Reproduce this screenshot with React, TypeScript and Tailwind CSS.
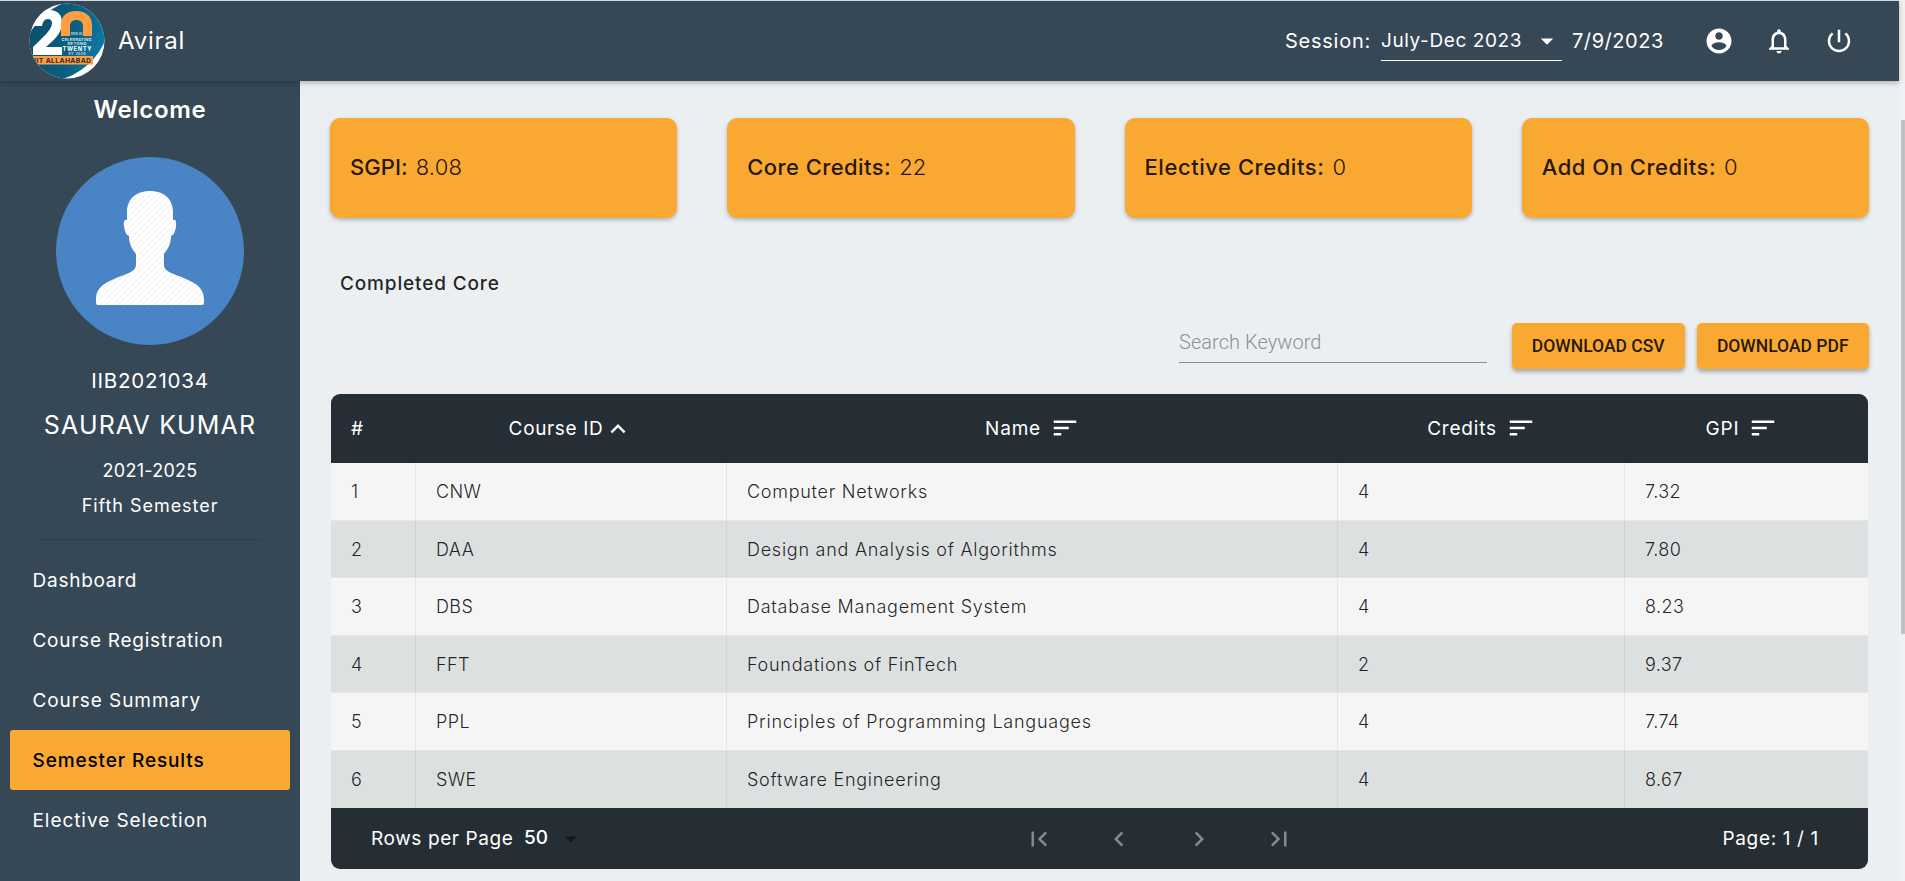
import type { ReactNode } from "react";

type Course = [string, string, string, string];

const courses: Course[] = [
  ["CNW", "Computer Networks", "4", "7.32"],
  ["DAA", "Design and Analysis of Algorithms", "4", "7.80"],
  ["DBS", "Database Management System", "4", "8.23"],
  ["FFT", "Foundations of FinTech", "2", "9.37"],
  ["PPL", "Principles of Programming Languages", "4", "7.74"],
  ["SWE", "Software Engineering", "4", "8.67"],
];

const columns = "grid grid-cols-[85px_311px_611px_287px_243px]";

function Icon({ d, className = "size-[30px]" }: { d: string; className?: string }) {
  return (
    <svg viewBox="0 0 24 24" fill="currentColor" className={`shrink-0 ${className}`}>
      <path d={d} />
    </svg>
  );
}

const icons = {
  account:
    "M12 2C6.48 2 2 6.48 2 12s4.48 10 10 10 10-4.48 10-10S17.52 2 12 2zm0 3c1.66 0 3 1.34 3 3s-1.34 3-3 3-3-1.34-3-3 1.34-3 3-3zm0 14.2c-2.5 0-4.71-1.28-6-3.22.03-1.99 4-3.08 6-3.08 1.99 0 5.97 1.09 6 3.08-1.29 1.94-3.5 3.22-6 3.22z",
  bell: "M12 22c1.1 0 2-.9 2-2h-4c0 1.1.9 2 2 2zm6-6v-5c0-3.07-1.63-5.64-4.5-6.32V4c0-.83-.67-1.5-1.5-1.5s-1.5.67-1.5 1.5v.68C7.64 5.36 6 7.92 6 11v5l-2 2v1h16v-1l-2-2zm-2 1H8v-6c0-2.48 1.51-4.5 4-4.5s4 2.02 4 4.5v6z",
  power:
    "M13 3h-2v10h2V3zm4.83 2.17l-1.42 1.42C17.99 7.86 19 9.81 19 12c0 3.87-3.13 7-7 7s-7-3.13-7-7c0-2.19 1.01-4.14 2.58-5.42L6.17 5.17C4.23 6.82 3 9.26 3 12c0 4.97 4.03 9 9 9s9-4.03 9-9c0-2.74-1.23-5.18-3.17-6.83z",
  sort: "M3 18h6v-2H3v2zM3 6v2h18V6H3zm0 7h12v-2H3v2z",
  up: "M7.41 15.41L12 10.83l4.59 4.58L18 14l-6-6-6 6z",
  first: "M18.41 16.59L13.82 12l4.59-4.59L17 6l-6 6 6 6zM6 6h2v12H6z",
  prev: "M15.41 7.41L14 6l-6 6 6 6 1.41-1.41L10.83 12z",
  next: "M10 6L8.59 7.41 13.17 12l-4.58 4.59L10 18l6-6z",
  last: "M5.59 7.41L10.18 12l-4.59 4.59L7 18l6-6-6-6zM16 6h2v12h-2z",
  drop: "M7 10l5 5 5-5z",
};

function Logo() {
  return (
    <svg viewBox="0 0 76 76" className="size-[76px] shrink-0">
      <defs>
        <clipPath id="logo-clip">
          <circle cx="38" cy="38" r="37.5" />
        </clipPath>
        <linearGradient id="logo-bg" x1="0" y1="0" x2="1" y2="1">
          <stop offset="0" stopColor="#0b4a63" />
          <stop offset="0.55" stopColor="#0a5f80" />
          <stop offset="1" stopColor="#0e86b8" />
        </linearGradient>
      </defs>
      <g clipPath="url(#logo-clip)">
        <rect width="76" height="76" fill="#fff" />
        <ellipse cx="37" cy="37" rx="48" ry="33" fill="url(#logo-bg)" transform="rotate(-42 37 37)" />
        <path
          d="M3 23 C6 12 12 7 20 7 C29 7 33 12 33 20 C33 30 25 37 17 44 H33 V52 H4 V44 C14 34 23 27 23 20 C23 17 21 16 19 16 C15 16 14 19 13 23 Z"
          fill="#fff"
        />
        <path
          d="M32 33 V22 C32 12 39 8 47.5 8 C56 8 63 13 63 22 V33 H54 V23 C54 19 51 17 47.5 17 C44 17 41 19 41 23 V33 Z"
          fill="#ff9d42"
        />
        <rect x="0" y="53" width="64" height="8.5" fill="#ff9d42" />
        <g fill="#fff" fontFamily="Inter, sans-serif" fontWeight="500" textAnchor="middle">
          <text x="47.5" y="32" fontSize="3.5">IIITA IS</text>
          <text x="47.5" y="37.5" fontSize="4" textLength="30">CELEBRATING</text>
          <text x="48" y="41.8" fontSize="4" textLength="19">BEYOND</text>
          <text x="48" y="47.5" fontSize="5.8" fontWeight="700" textLength="29">TWENTY</text>
          <text x="48" y="52" fontSize="3.5" textLength="17">BY 2020</text>
        </g>
        <text x="3" y="59.8" fontSize="6.8" fontWeight="700" fontFamily="Inter, sans-serif" fill="#1d2b33" textLength="59">
          IIIT ALLAHABAD
        </text>
      </g>
    </svg>
  );
}

function Avatar() {
  return (
    <svg viewBox="0 0 188 188" className="mt-[29px] size-[188px]">
      <defs>
        <pattern id="stripes" width="6" height="6" patternUnits="userSpaceOnUse">
          <path d="M-1 1 L1 -1 M0 6 L6 0 M5 7 L7 5" stroke="#000" strokeOpacity="0.045" strokeWidth="1.2" />
        </pattern>
      </defs>
      <circle cx="94" cy="94" r="94" fill="#4a86c7" />
      <path
        d="M94 34 C79 34 71 43 71 55 V63 C68 62 67.5 65 68 69 C68.5 74 70 78 73 79 C73 87 76 92 80 97 V107 C80 112 78 113 73 116 C59 122 40 126 40 142 V146 Q40 148 42 148 H146 Q148 148 148 146 V142 C148 126 129 122 115 116 C110 113 108 112 108 107 V97 C112 92 115 87 115 79 C118 78 119.5 74 120 69 C120.5 65 120 62 117 63 V55 C117 43 109 34 94 34 Z"
        fill="#fff"
      />
      <circle cx="94" cy="94" r="94" fill="url(#stripes)" />
    </svg>
  );
}

function Header() {
  return (
    <header className="relative z-10 flex h-[81px] w-[1899px] shrink-0 items-center border-t border-[#d3d8dc] bg-[#364855] pl-[29px] text-white shadow-[0_2px_5px_rgba(0,0,0,0.25)]">
      <Logo />
      <span className="ml-[13px] text-[24px] tracking-[0.74px]">Aviral</span>
      <div className="ml-auto flex items-center text-[20px]">
        <span className="w-[96px] tracking-[0.75px]">Session:</span>
        <div className="flex h-[39px] w-[181px] items-center justify-between border-b-[1.5px] border-white">
          <span className="pt-[2px] text-[19px] tracking-[0.6px]">July-Dec 2023</span>
          <Icon d={icons.drop} />
        </div>
        <span className="ml-[10px] w-[132px] tracking-[0.55px]">7/9/2023</span>
        <div className="flex items-center gap-[30px] pr-[45px]">
          <Icon d={icons.account} />
          <Icon d={icons.bell} />
          <Icon d={icons.power} />
        </div>
      </div>
    </header>
  );
}

const links: [string, string][] = [
  ["Dashboard", "tracking-[0.75px]"],
  ["Course Registration", "tracking-[0.74px]"],
  ["Course Summary", "tracking-[0.92px]"],
  ["Semester Results", "tracking-[0.88px]"],
  ["Elective Selection", "tracking-[0.94px]"],
];

function Sidebar() {
  return (
    <aside className="flex w-[300px] shrink-0 flex-col items-center bg-[#364855] text-white">
      <h2 className="mt-[11px] text-[24px] leading-[36px] font-semibold tracking-[0.7px]">Welcome</h2>
      <Avatar />
      <p className="mt-[24px] text-[20.5px] leading-[24px] tracking-[0.8px]">IIB2021034</p>
      <p className="mt-[17px] text-[25px] leading-[30px] tracking-[1.15px]">SAURAV KUMAR</p>
      <p className="mt-[20px] text-[18px] leading-[22px] tracking-[0.25px]">2021-2025</p>
      <p className="mt-[13px] text-[18px] leading-[22px] tracking-[0.95px]">Fifth Semester</p>
      <hr className="mt-[22px] w-[224px] border-[#2e3d49]" />
      <nav className="mt-[10px] flex w-[280px] flex-col">
        {links.map(([label, tracking]) => (
          <a
            key={label}
            className={`flex h-[60px] items-center rounded-[3px] pt-[2px] pl-[22.5px] text-[19px] ${tracking} ${
              label === "Semester Results" ? "bg-[#f9a932] font-medium text-black" : ""
            }`}
          >
            {label}
          </a>
        ))}
      </nav>
    </aside>
  );
}

function Stat({ label, value, tracking }: { label: string; value: string; tracking: string }) {
  return (
    <div className="flex h-[100px] items-center gap-[8px] rounded-[10px] bg-[#f9a932] pb-px pl-[20px] text-[22px] text-black/87 shadow-[0_2px_4px_rgba(0,0,0,0.25)]">
      <span className={`font-medium ${tracking}`}>{label}</span>
      <span className="font-light tracking-[0.2px]">{value}</span>
    </div>
  );
}

function DownloadButton({ children }: { children: ReactNode }) {
  return (
    <button className="h-[46px] w-[172.5px] rounded-[5px] bg-[#f9a932] font-[Roboto] text-[17.5px] font-medium text-black/87 shadow-[0_3px_4px_rgba(0,0,0,0.3)]">
      {children}
    </button>
  );
}

function Cell({ children, last = false, tracking = "" }: { children: ReactNode; last?: boolean; tracking?: string }) {
  return (
    <div className={`flex items-center pt-px pl-[20px] ${tracking} ${last ? "" : "border-r border-black/6"}`}>
      {children}
    </div>
  );
}

function SortHead({ label, className = "" }: { label: string; className?: string }) {
  return (
    <div className={`flex items-center justify-center gap-[9px] ${className}`}>
      <span className="pt-px tracking-[0.8px]">{label}</span>
      <Icon d={icons.sort} className="mb-px size-[30px]" />
    </div>
  );
}

function Table() {
  return (
    <section className="mx-px mt-[24px] w-[1537px] overflow-hidden rounded-[9px] bg-[#242e34]">
      <div className={`${columns} h-[69px] text-[19px] text-white`}>
        <div className="flex items-center pt-px pl-[20px]">#</div>
        <div className="flex items-center justify-center pr-px">
          <span className="pt-px tracking-[0.65px]">Course ID</span>
          <Icon d={icons.up} />
        </div>
        <SortHead label="Name" />
        <SortHead label="Credits" />
        <SortHead label="GPI" className="pr-[9px]" />
      </div>
      {courses.map((c, i) => (
        <div
          key={c[0]}
          className={`${columns} h-[57.5px] border-b border-[#e6e8e8] text-[18px] font-light tracking-[0.4px] text-black/87 ${
            i % 2 ? "bg-[#dce0e0]" : "bg-[#f5f5f5]"
          } ${i === courses.length - 1 ? "border-b-0" : ""}`}
        >
          <Cell>{i + 1}</Cell>
          <Cell>{c[0]}</Cell>
          <Cell tracking="tracking-[0.74px]">{c[1]}</Cell>
          <Cell>{c[2]}</Cell>
          <Cell last>{c[3]}</Cell>
        </div>
      ))}
      <footer className="grid h-[61px] grid-cols-[653px_270px_1fr] items-center pr-[49px] pl-[40px] text-[19px] text-white">
        <div className="flex items-center">
          <span className="pt-px tracking-[0.6px]">Rows per Page</span>
          <span className="mb-px ml-[10.5px] font-medium">50</span>
          <Icon d={icons.drop} className="ml-[8px] size-[30px] text-[#13191d]" />
        </div>
        <div className="flex justify-between text-[#858a8d]">
          <Icon d={icons.first} />
          <Icon d={icons.prev} />
          <Icon d={icons.next} />
          <Icon d={icons.last} />
        </div>
        <span className="pt-[2px] text-right tracking-[0.65px]">Page: 1 / 1</span>
      </footer>
    </section>
  );
}

export default function App() {
  return (
    <div className="flex h-[881px] w-[1905px] overflow-hidden bg-[#f1f1f1] font-[Inter,sans-serif]">
      <div className="flex w-[1899px] shrink-0 flex-col bg-[#ebeff2]">
        <Header />
        <div className="flex flex-1">
          <Sidebar />
          <main className="flex flex-1 flex-col px-[30px] pt-[37px]">
            <div className="grid grid-cols-4 gap-[50px]">
              <Stat label="SGPI:" value="8.08" tracking="tracking-[0.05px]" />
              <Stat label="Core Credits:" value="22" tracking="tracking-[0.42px]" />
              <Stat label="Elective Credits:" value="0" tracking="tracking-[0.55px]" />
              <Stat label="Add On Credits:" value="0" tracking="tracking-[0.52px]" />
            </div>
            <h3 className="mt-[54px] ml-[10px] text-[19px] leading-[24px] font-medium tracking-[0.85px] text-black/87">
              Completed Core
            </h3>
            <div className="mt-[27px] flex h-[47px] justify-end">
              <div className="mr-[25px] h-[40px] w-[308px] border-b border-[#8b8d8f] pt-[6px] font-[Roboto] text-[20px] leading-[26px] font-light tracking-[0.05px] text-[#8e9092]">
                Search Keyword
              </div>
              <div className="flex gap-[12px]">
                <DownloadButton>DOWNLOAD CSV</DownloadButton>
                <DownloadButton>DOWNLOAD PDF</DownloadButton>
              </div>
            </div>
            <Table />
          </main>
        </div>
      </div>
      <div className="flex flex-1 justify-end pt-[120px]">
        <div className="h-[514px] w-1 bg-[#c1c1c1]" />
      </div>
    </div>
  );
}
